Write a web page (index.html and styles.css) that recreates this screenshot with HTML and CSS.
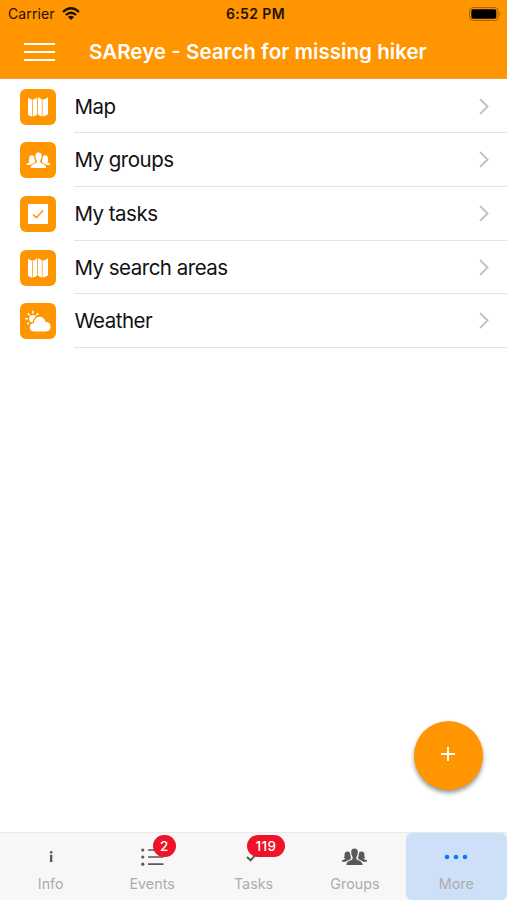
FILE: index.html
```html
<!DOCTYPE html>
<html lang="en">
<head>
    <meta charset="utf-8">
    <title>SAReye</title>
    <link rel="stylesheet" href="styles.css">
</head>
<body>
<svg width="0" height="0" class="defs">
    <symbol id="map" viewBox="0 0 22 22">
        <path d="M1 1.5 Q2.6 3.6 5.3 3.6 V20.5 Q2.6 20.4 1 18.5Z M6 3.6 Q8.8 3.2 10 1.3 V18.5 Q8.8 20.2 6 20.5Z M10.8 1.3 Q12.8 1.5 14.8 3.6 V20.5 Q12.8 20 10.8 18.5Z M15.5 3.6 Q18.6 3.6 21 1.3 V18.3 Q18.6 20.4 15.5 20.5Z"/>
    </symbol>
    <symbol id="people" viewBox="0 0 26 18">
        <path d="M13 0.5 C15.3 0.5 16.4 2 16.3 4.3 C16.2 7 15.4 8 15 8.8 C14.6 10 14.8 11.2 15.6 11.7 C17.5 12.7 21 13 21.2 17 H4.8 C5 13 8.5 12.7 10.4 11.7 C11.2 11.2 11.4 10 11 8.8 C10.6 8 9.8 7 9.7 4.3 C9.6 2 10.7 0.5 13 0.5Z"/>
        <path d="M6 3.4 C8 3.4 8.6 4.6 8.7 6.3 C8.8 8.6 9.8 9 9.2 11 C7.4 12 5.5 12.5 4.4 13.8 H0.3 C0.3 11.5 3.2 11.7 4.2 10.6 C2.8 10.2 2.4 9.8 2.4 9.5 C3.4 8.6 2.9 7.7 3.1 6.3 C3.2 4.6 4 3.4 6 3.4Z"/>
        <path d="M20 3.4 C18 3.4 17.4 4.6 17.3 6.3 C17.2 8.6 16.2 9 16.8 11 C18.6 12 20.5 12.5 21.6 13.8 H25.7 C25.7 11.5 22.8 11.7 21.8 10.6 C23.2 10.2 23.6 9.8 23.6 9.5 C22.6 8.6 23.1 7.7 22.9 6.3 C22.8 4.6 22 3.4 20 3.4Z"/>
    </symbol>
    <symbol id="chevron" viewBox="0 0 10 17">
        <path d="M1 1 L8.5 8.5 L1 16" fill="none" stroke="#c4c4c8" stroke-width="2"/>
    </symbol>
</svg>

<header class="header">
    <div class="status">
        <div class="carrier">
            <span>Carrier</span>
            <svg width="18" height="13" viewBox="0 0 18 13">
                <g fill="none" stroke="#1c1100" stroke-width="2.3">
                    <path d="M1 5 Q9 -2.4 17 5"/>
                    <path d="M3.9 8 Q9 3.4 14.1 8"/>
                </g>
                <path d="M6 10 Q9 7.6 12 10 L9 13Z" fill="#1c1100"/>
            </svg>
        </div>
        <span class="time">6:52 PM</span>
        <svg class="battery" width="33" height="14" viewBox="0 0 33 14">
            <rect x="0.6" y="0.6" width="28.5" height="12.8" rx="3.4" fill="none" stroke="#a66100"/>
            <rect x="2.3" y="2.2" width="25" height="9.6" rx="1.8"/>
            <path d="M30.5 4.8 Q32.4 7 30.5 9.2Z" fill="#a66100"/>
        </svg>
    </div>
    <div class="navbar">
        <div class="menu"><i></i><i></i><i></i></div>
        <h1>SAReye - Search for missing hiker</h1>
    </div>
</header>

<main class="content">
    <ul class="list">
        <li>
            <span class="icon"><svg width="22" height="22"><use href="#map"/></svg></span>
            <div class="row"><span>Map</span><svg width="10" height="17"><use href="#chevron"/></svg></div>
        </li>
        <li>
            <span class="icon"><svg width="25" height="17"><use href="#people"/></svg></span>
            <div class="row"><span>My groups</span><svg width="10" height="17"><use href="#chevron"/></svg></div>
        </li>
        <li>
            <span class="icon">
                <svg width="20" height="20" viewBox="0 0 20 20">
                    <rect width="20" height="20" rx="1"/>
                    <path d="M5 10.5 L8.4 13.7 L15 6.5" fill="none" stroke="#ff9500" stroke-width="1.6"/>
                </svg>
            </span>
            <div class="row"><span>My tasks</span><svg width="10" height="17"><use href="#chevron"/></svg></div>
        </li>
        <li>
            <span class="icon"><svg width="22" height="22"><use href="#map"/></svg></span>
            <div class="row"><span>My search areas</span><svg width="10" height="17"><use href="#chevron"/></svg></div>
        </li>
        <li>
            <span class="icon">
                <svg width="26" height="22" viewBox="0 0 26 22">
                    <circle cx="8" cy="8.8" r="3.8"/>
                    <path d="M8 0.7 V3.6 M2.7 3.3 L4.6 5.3 M0.3 8.8 H2.9 M13.3 3.3 L11.4 5.3 M2.2 14.2 L4 12.5" stroke="#fff" stroke-width="1.5"/>
                    <path d="M9 22 C2.6 22 2.8 13.2 8.2 12.6 C9.6 4.4 19 4.2 20.8 11.2 C28 11.6 28 22 21 22Z" stroke="#ff9500" stroke-width="1.2"/>
                </svg>
            </span>
            <div class="row"><span>Weather</span><svg width="10" height="17"><use href="#chevron"/></svg></div>
        </li>
    </ul>
    <button class="fab">
        <svg width="16" height="16" viewBox="0 0 16 16"><path d="M8 1 V15 M1 8 H15" stroke="#fff" stroke-width="1.8"/></svg>
    </button>
</main>

<nav class="tabs">
    <a class="tab">
        <div class="glyph">
            <svg width="4" height="13" viewBox="0 0 4 13"><circle cx="2.2" cy="2.2" r="1.3"/><path d="M0.7 4.8 H3.3 V11 L3.7 12 H0.6 L1 11 V5.6Z"/></svg>
        </div>
        <span>Info</span>
    </a>
    <a class="tab">
        <div class="glyph">
            <svg width="23" height="18" viewBox="0 0 23 18">
                <path d="M7 2 H22.5 M7 9 H22.5 M7 16.2 H22.5" stroke="#59595b" stroke-width="1.7"/>
                <circle cx="1.8" cy="2" r="1.6"/><circle cx="1.8" cy="9" r="1.6"/><circle cx="1.8" cy="16.2" r="1.6"/>
            </svg>
            <b class="badge">2</b>
        </div>
        <span>Events</span>
    </a>
    <a class="tab">
        <div class="glyph">
            <svg width="17" height="14" viewBox="0 0 17 14"><path d="M2 7 L5.6 10.3 L15 0" fill="none" stroke="#59595b" stroke-width="2"/></svg>
            <b class="badge wide">119</b>
        </div>
        <span>Tasks</span>
    </a>
    <a class="tab">
        <div class="glyph"><svg width="27" height="18"><use href="#people"/></svg></div>
        <span>Groups</span>
    </a>
    <a class="tab active">
        <div class="glyph">
            <svg width="24" height="6" viewBox="0 0 24 6"><circle cx="3" cy="3" r="2.3"/><circle cx="12" cy="3" r="2.3"/><circle cx="21" cy="3" r="2.3"/></svg>
        </div>
        <span>More</span>
    </a>
</nav>
</body>
</html>
```
FILE: styles.css
```css
* {
	box-sizing: border-box;
}

body {
	margin: 0;
	height: 900px;
	display: flex;
	flex-direction: column;
	overflow: hidden;
	background-color: #fff;
	font-family: Inter, "Liberation Sans", sans-serif;
}

svg {
	display: block;
}

.defs {
	position: absolute;
}

.header {
	height: 79px;
	background-color: #ff9500;
	border-bottom: 1px solid #f0a33c;
}

.status {
	display: grid;
	grid-template-columns: 1fr auto 1fr;
	align-items: center;
	height: 27px;
	padding: 0 5px 0 8px;
	font-size: 14px;
	color: #1c1100;
}

.carrier {
	display: flex;
	align-items: center;
	gap: 7px;
	letter-spacing: 0.1px;
}

.time {
	padding-left: 1px;
	font-weight: 600;
	letter-spacing: 0.4px;
}

.battery {
	justify-self: end;
}

.navbar {
	display: flex;
	align-items: center;
	height: 50px;
	padding-left: 24px;
}

.menu {
	display: flex;
	flex-direction: column;
	gap: 6px;
	width: 31px;
	margin-right: 34px;
}

.menu i {
	height: 2px;
	background-color: #fff;
}

h1 {
	margin: 0;
	padding-bottom: 2px;
	font-size: 20.6px;
	font-weight: 600;
	color: #fff;
	white-space: nowrap;
}

.content {
	flex: 1;
	display: flex;
	flex-direction: column;
	justify-content: space-between;
}

.list {
	list-style: none;
	margin: 0;
	padding: 0.7px 0 0;
}

.list li {
	display: flex;
	align-items: center;
	gap: 18px;
	height: 53.7px;
	padding-left: 20.4px;
}

.icon {
	display: flex;
	align-items: center;
	justify-content: center;
	width: 36px;
	height: 36px;
	border-radius: 6px;
	background-color: #ff9500;
	fill: #fff;
}

.row {
	flex: 1;
	display: flex;
	align-items: center;
	justify-content: space-between;
	height: 100%;
	padding-right: 18px;
	border-bottom: 1px solid #e4e4e6;
	font-size: 20.5px;
	letter-spacing: -0.5px;
	color: #111;
}

.fab {
	display: flex;
	align-items: center;
	justify-content: center;
	align-self: flex-end;
	width: 69px;
	height: 69px;
	margin: 0 24px 42px 0;
	padding: 0 1px 3px 0;
	border: none;
	border-radius: 50%;
	background-color: #ff9500;
	box-shadow: 0 3px 4px rgba(0, 0, 0, 0.4);
}

.tabs {
	display: flex;
	height: 68px;
	border-top: 1px solid #e9e9e9;
	background-color: #f7f7f7;
}

.tab {
	flex: 1;
	display: flex;
	flex-direction: column;
	align-items: center;
	font-size: 14.3px;
	line-height: 18px;
	color: #acacae;
	fill: #59595b;
}

.glyph {
	display: flex;
	align-items: center;
	position: relative;
	height: 47px;
	margin-bottom: -5px;
}

.badge {
	position: absolute;
	left: 12px;
	top: 2px;
	min-width: 23px;
	height: 22px;
	padding: 0 7px;
	border-radius: 11px;
	background-color: #ee1329;
	font-size: 13.5px;
	font-weight: 500;
	line-height: 22px;
	text-align: center;
	color: #fff;
}

.badge.wide {
	left: 2px;
	width: 38px;
	letter-spacing: 0.5px;
}

.active {
	border-radius: 6px;
	background-color: #cde0f8;
	fill: #0a7bfb;
}
```
